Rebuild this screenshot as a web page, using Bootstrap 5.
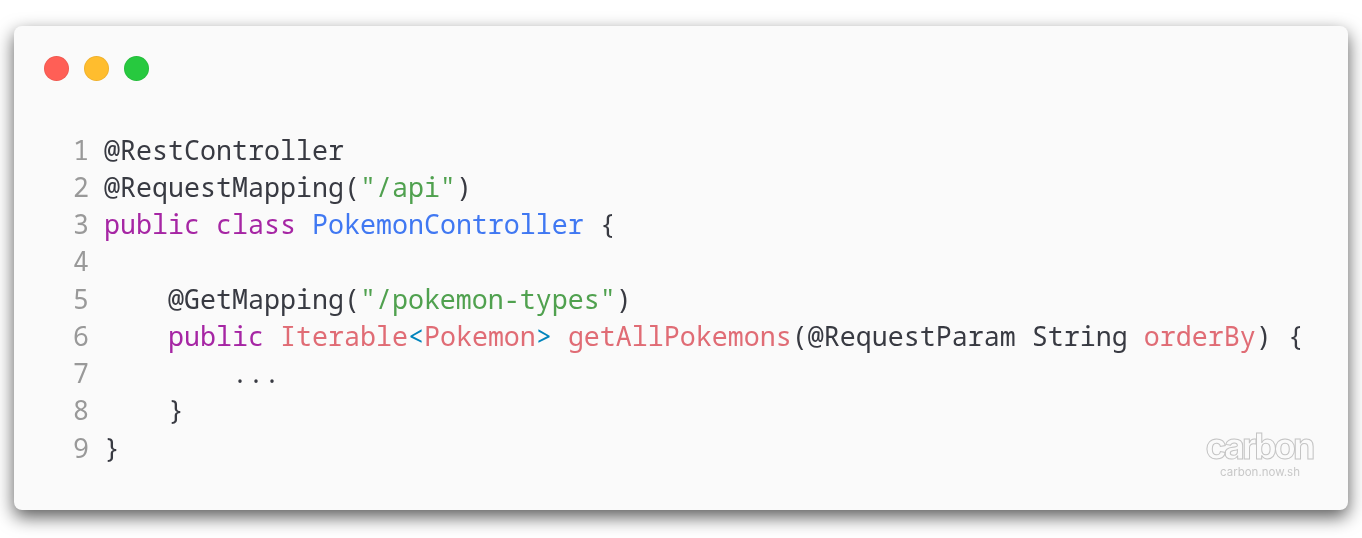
<!DOCTYPE html>
<html><head><meta charset="utf-8">
<link href="https://cdn.jsdelivr.net/npm/bootstrap@5.3.0/dist/css/bootstrap.min.css" rel="stylesheet">
<style>
html,body{height:538px;overflow:hidden;background:#fff}
.stage{padding:26px 14px 28px;height:538px}
.win{background:#fafafa;border-radius:8px;height:484px;box-shadow:0 7px 18px rgba(0,0,0,.65);padding:0 30px;position:relative}
.dots{height:86px;padding-top:30px;gap:15px}
.dot{width:25px;height:25px;border-radius:50%;border:1px solid rgba(0,0,0,.06)}
.dr{background:#ff5f56}.dy{background:#ffbd2e}.dg{background:#27c93f}
.code{margin:0;padding-top:18.55px;font:26.67px/37.25px "Noto Sans Mono","DejaVu Sans Mono",monospace;color:#383a42;overflow:visible;will-change:transform}
.ln{display:inline-block;width:45px;text-align:right;margin-right:15px;color:#999}
.kw{color:#a626a4}.st{color:#50a14f}.ti{color:#4078f2}.er{color:#e06c75}.ta{color:#0184bc}
.wm{position:absolute;right:35px;top:405px;width:108px;text-align:center;will-change:transform}
.wm1{font:700 36px/30px "Inter",sans-serif;letter-spacing:-3px;color:#fafafa;-webkit-text-stroke:1px #c4c4c4;display:block}
.wm2{font:11.5px/16px "Inter",sans-serif;color:#c8c8c8;display:block;margin-top:3px;padding-left:2px}
</style></head><body>
<div class="stage"><div class="win">
<div class="d-flex dots"><span class="dot dr"></span><span class="dot dy"></span><span class="dot dg"></span></div>
<pre class="code"><span class="ln">1</span>@RestController
<span class="ln">2</span>@RequestMapping(<span class="st">"/api"</span>)
<span class="ln">3</span><span class="kw">public</span> <span class="kw">class</span> <span class="ti">PokemonController</span> {
<span class="ln">4</span>
<span class="ln">5</span>    @GetMapping(<span class="st">"/pokemon-types"</span>)
<span class="ln">6</span>    <span class="kw">public</span> <span class="er">Iterable</span><span class="ta">&lt;</span><span class="er">Pokemon</span><span class="ta">&gt;</span> <span class="er">getAllPokemons</span>(@RequestParam String <span class="er">orderBy</span>) {
<span class="ln">7</span>        ...
<span class="ln">8</span>    }
<span class="ln">9</span>}</pre>
<div class="wm"><span class="wm1">carbon</span><span class="wm2">carbon.now.sh</span></div>
</div></div>
</body></html>
